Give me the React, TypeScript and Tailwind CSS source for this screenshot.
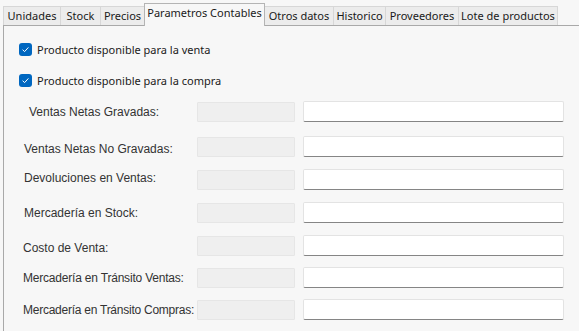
import React from "react";

const tabs = [
  { name: "Unidades", w: "w-[58px]" },
  { name: "Stock", w: "w-[41px]" },
  { name: "Precios", w: "w-[45px]" },
  { name: "Parametros Contables", w: "w-[121px]", active: true },
  { name: "Otros datos", w: "w-[70px]" },
  { name: "Historico", w: "w-[53px]" },
  { name: "Proveedores", w: "w-[74px]" },
  { name: "Lote de productos", w: "w-[100px]" },
];

const rows = [
  { label: "Ventas Netas Gravadas:", mt: "mt-[14px]", lx: "pl-[6px]", ly: "" },
  { label: "Ventas Netas No Gravadas:", mt: "mt-[14px]", lx: "pl-[1px]", ly: "translate-y-[2px]" },
  { label: "Devoluciones en Ventas:", mt: "mt-[12px]", lx: "pl-[1px]", ly: "-translate-y-[2px]" },
  { label: "Mercadería en Stock:", mt: "mt-[12px]", lx: "pl-[1px]", ly: "" },
  { label: "Costo de Venta:", mt: "mt-[12px]", lx: "", ly: "translate-y-[2px]" },
  { label: "Mercadería en Tránsito Ventas:", mt: "mt-[11px]", lx: "tracking-[-0.2px]", ly: "" },
  { label: "Mercadería en Tránsito Compras:", mt: "mt-[11px]", lx: "tracking-[-0.25px]", ly: "" },
];

function Check({ label }: { label: string }) {
  return (
    <div className="flex items-center h-[13px]">
      <span className="w-[13px] h-[13px] rounded-[3px] bg-[#0067c0] flex items-center justify-center">
        <svg width="9" height="9" viewBox="0 0 9 9">
          <path d="M1.6 4.7 L3.6 6.6 L7.4 2.4" fill="none" stroke="#ffffff" strokeWidth="1" />
        </svg>
      </span>
      <span className="ml-[5px] text-[11px] text-[#1a1a1a] leading-none whitespace-nowrap">{label}</span>
    </div>
  );
}

export default function App() {
  return (
    <div
      className="w-[579px] h-[331px] bg-[#f7f7f7] overflow-hidden"
      style={{ fontFamily: '"Noto Sans", "Open Sans", sans-serif' }}
    >
      <div className="ml-[3px] flex flex-col h-full">
        <div className="flex items-end h-[26px] border-b border-[#a9a9a9] shrink-0">
          {tabs.map((t) =>
            t.active ? (
              <div
                key={t.name}
                className={`${t.w} h-[23px] -mb-px -ml-px relative z-10 bg-[#f7f7f7] border border-b-0 border-[#b4b4b4] flex items-center justify-center text-[11px] text-[#1a1a1a] pb-[3px] whitespace-nowrap`}
              >
                {t.name}
              </div>
            ) : (
              <div
                key={t.name}
                className={`${t.w} h-[19px] -ml-px first:ml-0 bg-[#ececec] border border-b-0 border-[#d7d7d7] flex items-center justify-center text-[11px] text-[#1a1a1a] whitespace-nowrap`}
              >
                {t.name}
              </div>
            )
          )}
        </div>
        <div className="flex-1 border-l border-[#a9a9a9] pl-[15px] pt-[17px]">
          <Check label="Producto disponible para la venta" />
          <div className="mt-[18px]">
            <Check label="Producto disponible para la compra" />
          </div>
          <div
            className="flex flex-col"
            style={{ fontFamily: '"Liberation Sans", Arial, sans-serif' }}
          >
            {rows.map((r) => (
              <div key={r.label} className={`flex items-center ${r.mt} pl-[4px]`}>
                <div className={`w-[174px] shrink-0 text-[12px] text-[#333333] whitespace-nowrap ${r.lx} ${r.ly}`}>{r.label}</div>
                <div className="w-[98px] shrink-0 h-[20px] bg-[#efefef] border border-[#e6e6e6] rounded-[1px]" />
                <div className="ml-[8px] shrink-0 w-[261px] h-[21px] bg-white border border-[#e3e3e3] border-b-[#858585] rounded-[2px]" />
              </div>
            ))}
          </div>
        </div>
      </div>
    </div>
  );
}
